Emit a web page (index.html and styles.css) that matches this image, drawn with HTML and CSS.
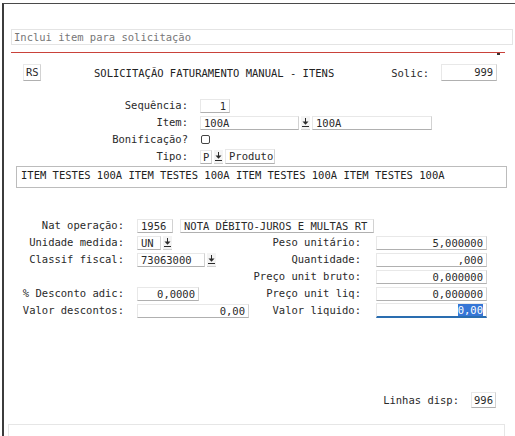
FILE: index.html
```html
<!DOCTYPE html>
<html lang="pt-BR">
<head>
    <meta charset="UTF-8">
    <meta name="viewport" content="width=device-width, initial-scale=1.0">
    <title>Solicitação Faturamento Manual - Itens</title>
    <link rel="stylesheet" href="styles.css">
</head>
<body>
    <div class="window">
        <div class="prompt">Inclui item para solicitação</div>
        <div class="rule"><span class="rule-mark"></span></div>

        <div class="head">
            <span class="field code">RS</span>
            <span class="title">SOLICITAÇÃO FATURAMENTO MANUAL - ITENS</span>
            <span class="solic-label">Solic:</span>
            <span class="field num solic">999</span>
        </div>

        <div class="item-form">
            <label>Sequência:</label>
            <div class="cell"><span class="field num seq">1</span></div>

            <label>Item:</label>
            <div class="cell">
                <span class="field item">100A</span>
                <span class="lookup"><svg width="7" height="9" viewBox="0 0 7 9"><rect x="3" y="0" width="1" height="4"/><polygon points="0.5,3.5 6.5,3.5 3.5,6.8"/><rect x="0" y="8" width="7" height="1"/></svg></span>
                <span class="field item-desc">100A</span>
            </div>

            <label>Bonificação?</label>
            <div class="cell"><span class="check"></span></div>

            <label>Tipo:</label>
            <div class="cell">
                <span class="field tipo-code">P</span>
                <span class="lookup"><svg width="7" height="9" viewBox="0 0 7 9"><rect x="3" y="0" width="1" height="4"/><polygon points="0.5,3.5 6.5,3.5 3.5,6.8"/><rect x="0" y="8" width="7" height="1"/></svg></span>
                <span class="field tipo">Produto</span>
            </div>
        </div>

        <div class="desc">ITEM TESTES 100A ITEM TESTES 100A ITEM TESTES 100A ITEM TESTES 100A</div>

        <div class="values">
            <label>Nat operação:</label>
            <div class="cell wide">
                <span class="field nat">1956</span>
                <span class="field nat-desc">NOTA DÉBITO-JUROS E MULTAS RT</span>
            </div>

            <label>Unidade medida:</label>
            <div class="cell">
                <span class="field un">UN</span>
                <span class="lookup"><svg width="7" height="9" viewBox="0 0 7 9"><rect x="3" y="0" width="1" height="4"/><polygon points="0.5,3.5 6.5,3.5 3.5,6.8"/><rect x="0" y="8" width="7" height="1"/></svg></span>
            </div>
            <label class="right">Peso unitário:</label>
            <div class="cell"><span class="field num money">5,000000</span></div>

            <label>Classif fiscal:</label>
            <div class="cell">
                <span class="field ncm">73063000</span>
                <span class="lookup"><svg width="7" height="9" viewBox="0 0 7 9"><rect x="3" y="0" width="1" height="4"/><polygon points="0.5,3.5 6.5,3.5 3.5,6.8"/><rect x="0" y="8" width="7" height="1"/></svg></span>
            </div>
            <label class="right">Quantidade:</label>
            <div class="cell"><span class="field num money">,000</span></div>

            <label></label>
            <div class="cell"></div>
            <label class="right">Preço unit bruto:</label>
            <div class="cell"><span class="field num money">0,000000</span></div>

            <label>% Desconto adic:</label>
            <div class="cell"><span class="field num pct">0,0000</span></div>
            <label class="right">Preço unit liq:</label>
            <div class="cell"><span class="field num money">0,000000</span></div>

            <label>Valor descontos:</label>
            <div class="cell"><span class="field num discount">0,00</span></div>
            <label class="right">Valor liquido:</label>
            <div class="cell"><span class="field num money focused"><span class="selected">0,00</span></span></div>
        </div>

        <div class="lines">
            <span>Linhas disp:</span>
            <span class="field num lines-count">996</span>
        </div>

        <div class="panel"></div>
    </div>
</body>
</html>
```

FILE: styles.css
```css
body {
    margin: 0;
    background: #fff;
    font-family: 'DejaVu Sans Mono', 'Liberation Mono', monospace;
    font-size: 10.5px;
    color: #2a2a2a;
    overflow: hidden;
}

.window {
    margin: 3px 0 0 2px;
    height: 433px;
    border-left: 2px solid #3c3c3c;
    border-top: 1px solid #4a4a4a;
    box-sizing: border-box;
    overflow: hidden;
}

/* generic input box */
.field {
    display: inline-block;
    box-sizing: border-box;
    height: 14px;
    line-height: 12px;
    padding: 0 3px;
    background: #fff;
    border: 1px solid #e8e8e8;
    border-bottom-color: #b0b0b0;
    border-right-color: #d2d2d2;
    white-space: nowrap;
    overflow: hidden;
}

.num {
    text-align: right;
}

/* small F3 lookup button next to a field */
.lookup {
    display: flex;
    align-items: center;
    justify-content: center;
    width: 9px;
    height: 13px;
    margin: 0 2px;
    background: #f4f4f4;
    border-bottom: 1px solid #d0d0d0;
    flex: none;
}

.lookup svg {
    fill: #2b2b2b;
}

.prompt {
    margin: 25px 0 0 7px;
    width: 502px;
    height: 16px;
    box-sizing: border-box;
    border: 1px solid #e4e4e4;
    padding-left: 2px;
    line-height: 14px;
    color: #777;
}

.rule {
    margin: 7px 0 0 7px;
    width: 494px;
    border-top: 1px solid #c9423a;
    display: flex;
    justify-content: flex-end;
}

.rule-mark {
    width: 3px;
    height: 2px;
    background: #333;
    margin-right: 5px;
}

.head {
    margin-top: 9px;
    height: 17px;
    display: flex;
    align-items: center;
}

.head .code {
    margin-left: 19px;
    width: 18px;
    height: 17px;
    line-height: 15px;
    padding: 0 2px;
}

.title {
    margin-left: 53px;
    color: #222;
}

.solic-label {
    margin-left: 57px;
}

.solic {
    margin-left: 12px;
    width: 56px;
    height: 17px;
    line-height: 15px;
}

.item-form {
    margin-top: 16px;
    display: grid;
    grid-template-columns: 184px auto;
    grid-auto-rows: 17px;
    column-gap: 12px;
}

.item-form label,
.values label {
    text-align: right;
    line-height: 17px;
    white-space: nowrap;
}

.cell {
    display: flex;
    align-items: center;
}

.seq { width: 30px; }
.item { width: 99px; }
.item-desc { width: 120px; }
.tipo-code { width: 12px; padding: 0 2px; }
.tipo { width: 50px; height: 15px; }

.check {
    width: 7px;
    height: 7px;
    border: 1px solid #444;
    border-radius: 2px;
    margin-left: 1px;
}

.desc {
    margin: 1px 0 0 12px;
    width: 491px;
    height: 22px;
    box-sizing: border-box;
    border: 1px solid #bcbcbc;
    padding: 2px 4px;
    line-height: 12px;
    color: #222;
}

.values {
    margin-top: 29px;
    display: grid;
    grid-template-columns: 120px 126px 111px 126px;
    grid-auto-rows: 17px;
}

.values .cell {
    padding-left: 13px;
}

.values .cell.wide {
    grid-column: 2 / span 3;
}

.values label.right + .cell {
    padding-left: 15px;
}

.nat { width: 36px; }
.nat-desc { width: 194px; margin-left: 7px; }
.un { width: 24px; }
.ncm { width: 68px; }
.pct { width: 62px; }
.discount { width: 112px; }
.money { width: 111px; }

.focused {
    border-bottom: 2px solid #2a6db0;
    height: 15px;
}

.selected {
    background: #3676d6;
    color: #fff;
}

.lines {
    margin-top: 72px;
    height: 17px;
    display: flex;
    align-items: center;
    justify-content: flex-end;
    padding-right: 19px;
}

.lines-count {
    margin-left: 12px;
    width: 25px;
    height: 16px;
    line-height: 14px;
    padding: 0 2px;
}

.panel {
    margin: 16px 0 0 4px;
    width: 497px;
    height: 20px;
    border: 1px solid #e6e6e6;
    box-sizing: border-box;
}
```
